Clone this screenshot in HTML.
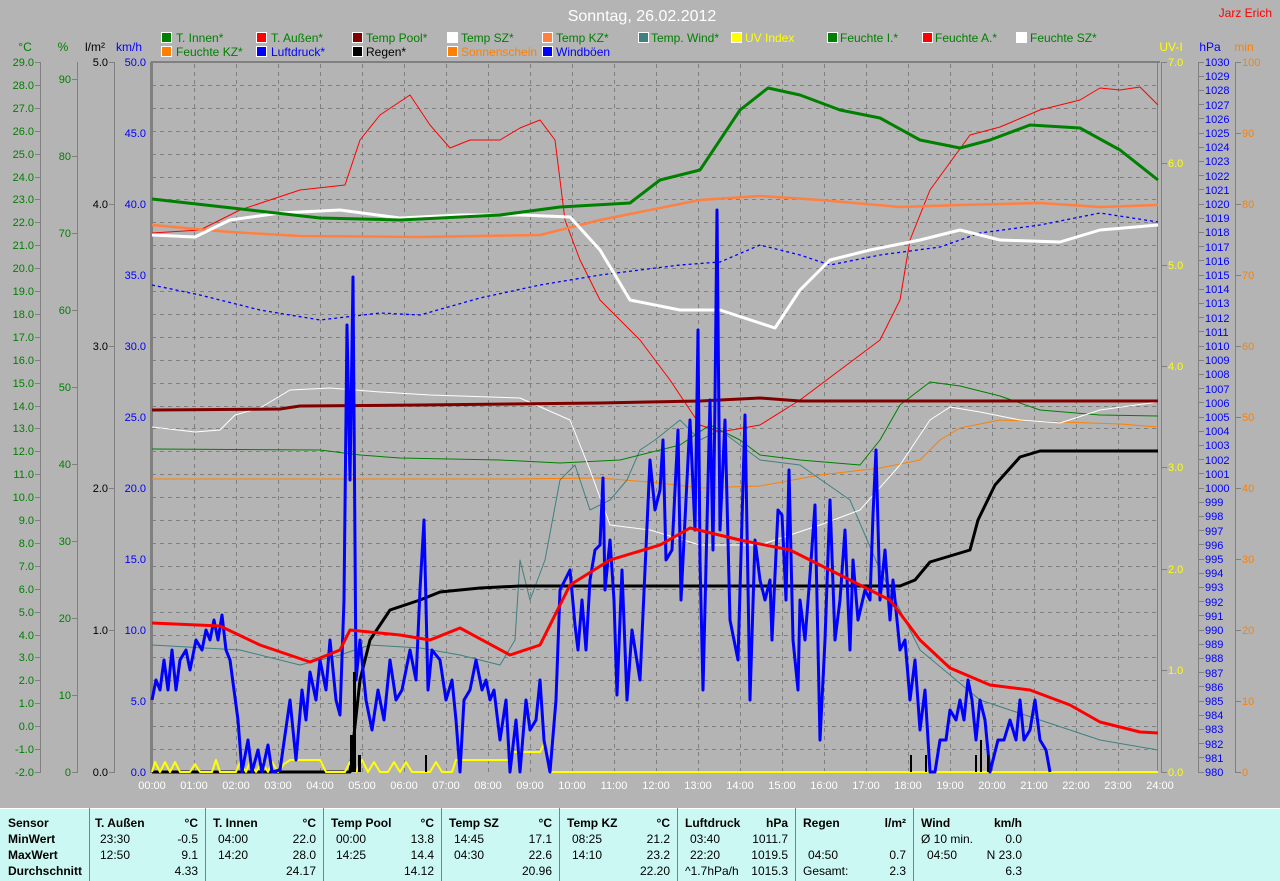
<!DOCTYPE html>
<html><head><meta charset="utf-8"><style>
html,body{margin:0;padding:0;background:#b4b4b4;}
svg{display:block;font-family:"Liberation Sans",sans-serif;}
.tb{font-size:12px;}
</style></head><body>
<svg width="1280" height="881" viewBox="0 0 1280 881" xmlns="http://www.w3.org/2000/svg">
<rect width="1280" height="881" fill="#b4b4b4"/>
<text x="642" y="21" text-anchor="middle" fill="#fff" font-size="16">Sonntag, 26.02.2012</text>
<text x="1272" y="17" text-anchor="end" fill="#f00" font-size="12">Jarz Erich</text>
<!-- legend -->
<g font-size="12" stroke="#fff" stroke-width="1">
<rect x="161.5" y="32.5" width="10" height="10" fill="#008000"/>
<rect x="256.5" y="32.5" width="10" height="10" fill="#f00"/>
<rect x="352.5" y="32.5" width="10" height="10" fill="#800000"/>
<rect x="447.5" y="32.5" width="10" height="10" fill="#fff"/>
<rect x="542.5" y="32.5" width="10" height="10" fill="#ff8040"/>
<rect x="638.5" y="32.5" width="10" height="10" fill="#408080"/>
<rect x="731.5" y="32.5" width="10" height="10" fill="#ff0"/>
<rect x="827.5" y="32.5" width="10" height="10" fill="#008000"/>
<rect x="922.5" y="32.5" width="10" height="10" fill="#f00"/>
<rect x="1016.5" y="32.5" width="10" height="10" fill="#fff"/>
<rect x="161.5" y="46.5" width="10" height="10" fill="#ff8000"/>
<rect x="256.5" y="46.5" width="10" height="10" fill="#00f"/>
<rect x="352.5" y="46.5" width="10" height="10" fill="#000"/>
<rect x="447.5" y="46.5" width="10" height="10" fill="#ff8000"/>
<rect x="542.5" y="46.5" width="10" height="10" fill="#00f"/>
</g>
<g font-size="12" fill="#008000">
<text x="176" y="42">T. Innen*</text>
<text x="271" y="42">T. Außen*</text>
<text x="366" y="42">Temp Pool*</text>
<text x="461" y="42">Temp SZ*</text>
<text x="556" y="42">Temp KZ*</text>
<text x="651" y="42">Temp. Wind*</text>
<text x="745" y="42" fill="#ff0">UV Index</text>
<text x="840" y="42">Feuchte I.*</text>
<text x="935" y="42">Feuchte A.*</text>
<text x="1030" y="42">Feuchte SZ*</text>
<text x="176" y="56">Feuchte KZ*</text>
<text x="271" y="56" fill="#00f">Luftdruck*</text>
<text x="366" y="56" fill="#000">Regen*</text>
<text x="461" y="56" fill="#ff8000">Sonnenschein</text>
<text x="556" y="56" fill="#00f">Windböen</text>
</g>
<!-- axis headers -->
<g font-size="12">
<text x="25" y="51" text-anchor="middle" fill="#008000">°C</text>
<text x="63" y="51" text-anchor="middle" fill="#008000">%</text>
<text x="95" y="51" text-anchor="middle" fill="#000">l/m²</text>
<text x="129" y="51" text-anchor="middle" fill="#00f">km/h</text>
<text x="1171" y="51" text-anchor="middle" fill="#ff0">UV-I</text>
<text x="1210" y="51" text-anchor="middle" fill="#00f">hPa</text>
<text x="1244" y="51" text-anchor="middle" fill="#ff8000">min</text>
</g>
<!-- grid -->
<g stroke="#808080" stroke-width="1" stroke-dasharray="4,4">
<path d="M194.5 64V772M236.5 64V772M278.5 64V772M320.5 64V772M362.5 64V772M404.5 64V772M446.5 64V772M488.5 64V772M530.5 64V772M572.5 64V772M614.5 64V772M656.5 64V772M698.5 64V772M740.5 64V772M782.5 64V772M824.5 64V772M866.5 64V772M908.5 64V772M950.5 64V772M992.5 64V772M1034.5 64V772M1076.5 64V772M1118.5 64V772"/>
<path d="M152 85.5H1158M152 108.5H1158M152 131.5H1158M152 154.5H1158M152 177.5H1158M152 199.5H1158M152 222.5H1158M152 245.5H1158M152 268.5H1158M152 291.5H1158M152 314.5H1158M152 337.5H1158M152 360.5H1158M152 383.5H1158M152 406.5H1158M152 428.5H1158M152 451.5H1158M152 474.5H1158M152 497.5H1158M152 520.5H1158M152 543.5H1158M152 566.5H1158M152 589.5H1158M152 612.5H1158M152 635.5H1158M152 657.5H1158M152 680.5H1158M152 703.5H1158M152 726.5H1158M152 749.5H1158"/>
</g>
<!-- borders -->
<g stroke="#808080" fill="none">
<path d="M151 62H1160" stroke-width="2"/>
<path d="M151.5 62V773" stroke-width="3"/>
<path d="M1157.5 62V773M1161.5 62V773" stroke-width="1"/>
<path d="M40.5 62V773M77.5 62V773M114.5 62V773M1198.5 62V773M1235.5 62V773"/>
</g>
<!-- °C axis -->
<g stroke="#808080"><path d="M35 62.5h5M35 85.5h5M35 108.5h5M35 131.5h5M35 154.5h5M35 177.5h5M35 199.5h5M35 222.5h5M35 245.5h5M35 268.5h5M35 291.5h5M35 314.5h5M35 337.5h5M35 360.5h5M35 383.5h5M35 406.5h5M35 428.5h5M35 451.5h5M35 474.5h5M35 497.5h5M35 520.5h5M35 543.5h5M35 566.5h5M35 589.5h5M35 612.5h5M35 635.5h5M35 657.5h5M35 680.5h5M35 703.5h5M35 726.5h5M35 749.5h5M35 772.5h5"/>
<path d="M72 79.5h5M72 156.5h5M72 233.5h5M72 310.5h5M72 387.5h5M72 464.5h5M72 541.5h5M72 618.5h5M72 695.5h5M72 772.5h5"/>
<path d="M109 62.5h5M109 204.5h5M109 346.5h5M109 488.5h5M109 630.5h5M109 772.5h5"/>
<path d="M1162 62.5h5M1162 163.5h5M1162 265.5h5M1162 366.5h5M1162 467.5h5M1162 569.5h5M1162 670.5h5M1162 772.5h5"/>
<path d="M1236 62.5h5M1236 133.5h5M1236 204.5h5M1236 275.5h5M1236 346.5h5M1236 417.5h5M1236 488.5h5M1236 559.5h5M1236 630.5h5M1236 701.5h5M1236 772.5h5"/>
</g>
<g font-size="11" fill="#008000" text-anchor="end">
<text x="34" y="66">29.0</text><text x="34" y="89">28.0</text><text x="34" y="112">27.0</text><text x="34" y="135">26.0</text><text x="34" y="158">25.0</text><text x="34" y="181">24.0</text><text x="34" y="203">23.0</text><text x="34" y="226">22.0</text><text x="34" y="249">21.0</text><text x="34" y="272">20.0</text><text x="34" y="295">19.0</text><text x="34" y="318">18.0</text><text x="34" y="341">17.0</text><text x="34" y="364">16.0</text><text x="34" y="387">15.0</text><text x="34" y="410">14.0</text><text x="34" y="432">13.0</text><text x="34" y="455">12.0</text><text x="34" y="478">11.0</text><text x="34" y="501">10.0</text><text x="34" y="524">9.0</text><text x="34" y="547">8.0</text><text x="34" y="570">7.0</text><text x="34" y="593">6.0</text><text x="34" y="616">5.0</text><text x="34" y="639">4.0</text><text x="34" y="661">3.0</text><text x="34" y="684">2.0</text><text x="34" y="707">1.0</text><text x="34" y="730">0.0</text><text x="34" y="753">-1.0</text><text x="34" y="776">-2.0</text>
<text x="71" y="83">90</text><text x="71" y="160">80</text><text x="71" y="237">70</text><text x="71" y="314">60</text><text x="71" y="391">50</text><text x="71" y="468">40</text><text x="71" y="545">30</text><text x="71" y="622">20</text><text x="71" y="699">10</text><text x="71" y="776">0</text>
</g>
<g font-size="11" fill="#000" text-anchor="end">
<text x="108" y="66">5.0</text><text x="108" y="208">4.0</text><text x="108" y="350">3.0</text><text x="108" y="492">2.0</text><text x="108" y="634">1.0</text><text x="108" y="776">0.0</text>
</g>
<g font-size="11" fill="#00f" text-anchor="end">
<text x="146" y="66">50.0</text><text x="146" y="137">45.0</text><text x="146" y="208">40.0</text><text x="146" y="279">35.0</text><text x="146" y="350">30.0</text><text x="146" y="421">25.0</text><text x="146" y="492">20.0</text><text x="146" y="563">15.0</text><text x="146" y="634">10.0</text><text x="146" y="705">5.0</text><text x="146" y="776">0.0</text>
</g>
<g font-size="11" fill="#ff0">
<text x="1168" y="66">7.0</text><text x="1168" y="167">6.0</text><text x="1168" y="269">5.0</text><text x="1168" y="370">4.0</text><text x="1168" y="471">3.0</text><text x="1168" y="573">2.0</text><text x="1168" y="674">1.0</text><text x="1168" y="776">0.0</text>
</g>
<g font-size="11" fill="#ff8000">
<text x="1242" y="66">100</text><text x="1242" y="137">90</text><text x="1242" y="208">80</text><text x="1242" y="279">70</text><text x="1242" y="350">60</text><text x="1242" y="421">50</text><text x="1242" y="492">40</text><text x="1242" y="563">30</text><text x="1242" y="634">20</text><text x="1242" y="705">10</text><text x="1242" y="776">0</text>
</g>
<g stroke="#808080"><path d="M1199 62.5h5M1199 76.5h5M1199 90.5h5M1199 104.5h5M1199 118.5h5M1199 133.5h5M1199 147.5h5M1199 161.5h5M1199 175.5h5M1199 189.5h5M1199 204.5h5M1199 218.5h5M1199 232.5h5M1199 246.5h5M1199 260.5h5M1199 275.5h5M1199 289.5h5M1199 303.5h5M1199 317.5h5M1199 331.5h5M1199 346.5h5M1199 360.5h5M1199 374.5h5M1199 388.5h5M1199 402.5h5M1199 417.5h5M1199 431.5h5M1199 445.5h5M1199 459.5h5M1199 473.5h5M1199 488.5h5M1199 502.5h5M1199 516.5h5M1199 530.5h5M1199 544.5h5M1199 559.5h5M1199 573.5h5M1199 587.5h5M1199 601.5h5M1199 615.5h5M1199 630.5h5M1199 644.5h5M1199 658.5h5M1199 672.5h5M1199 686.5h5M1199 701.5h5M1199 715.5h5M1199 729.5h5M1199 743.5h5M1199 757.5h5M1199 772.5h5"/></g>
<g font-size="11" fill="#00f">
<text x="1205" y="66">1030</text><text x="1205" y="80">1029</text><text x="1205" y="94">1028</text><text x="1205" y="109">1027</text><text x="1205" y="123">1026</text><text x="1205" y="137">1025</text><text x="1205" y="151">1024</text><text x="1205" y="165">1023</text><text x="1205" y="180">1022</text><text x="1205" y="194">1021</text><text x="1205" y="208">1020</text><text x="1205" y="222">1019</text><text x="1205" y="236">1018</text><text x="1205" y="251">1017</text><text x="1205" y="265">1016</text><text x="1205" y="279">1015</text><text x="1205" y="293">1014</text><text x="1205" y="307">1013</text><text x="1205" y="322">1012</text><text x="1205" y="336">1011</text><text x="1205" y="350">1010</text><text x="1205" y="364">1009</text><text x="1205" y="378">1008</text><text x="1205" y="393">1007</text><text x="1205" y="407">1006</text><text x="1205" y="421">1005</text><text x="1205" y="435">1004</text><text x="1205" y="449">1003</text><text x="1205" y="464">1002</text><text x="1205" y="478">1001</text><text x="1205" y="492">1000</text><text x="1205" y="506">999</text><text x="1205" y="520">998</text><text x="1205" y="535">997</text><text x="1205" y="549">996</text><text x="1205" y="563">995</text><text x="1205" y="577">994</text><text x="1205" y="591">993</text><text x="1205" y="606">992</text><text x="1205" y="620">991</text><text x="1205" y="634">990</text><text x="1205" y="648">989</text><text x="1205" y="662">988</text><text x="1205" y="677">987</text><text x="1205" y="691">986</text><text x="1205" y="705">985</text><text x="1205" y="719">984</text><text x="1205" y="733">983</text><text x="1205" y="748">982</text><text x="1205" y="762">981</text><text x="1205" y="776">980</text>
</g>
<!-- time labels -->
<g font-size="11" fill="#fff" text-anchor="middle">
<text x="152" y="789">00:00</text><text x="194" y="789">01:00</text><text x="236" y="789">02:00</text><text x="278" y="789">03:00</text><text x="320" y="789">04:00</text><text x="362" y="789">05:00</text><text x="404" y="789">06:00</text><text x="446" y="789">07:00</text><text x="488" y="789">08:00</text><text x="530" y="789">09:00</text><text x="572" y="789">10:00</text><text x="614" y="789">11:00</text><text x="656" y="789">12:00</text><text x="698" y="789">13:00</text><text x="740" y="789">14:00</text><text x="782" y="789">15:00</text><text x="824" y="789">16:00</text><text x="866" y="789">17:00</text><text x="908" y="789">18:00</text><text x="950" y="789">19:00</text><text x="992" y="789">20:00</text><text x="1034" y="789">21:00</text><text x="1076" y="789">22:00</text><text x="1118" y="789">23:00</text><text x="1160" y="789">24:00</text>
</g>
<!-- data -->
<g fill="none" stroke-linejoin="round">
<polyline stroke="#ff8000" stroke-width="1" points="152,479 512,479 600,478 660,483 700,488 760,486 820,475 880,468 920,460 940,440 960,428 1000,420 1060,422 1120,424 1158,427"/>
<polyline stroke="#408080" stroke-width="1" points="152,645 240,650 300,665 340,655 370,645 420,648 460,655 500,665 515,640 520,560 530,600 545,560 560,480 575,465 590,510 610,500 627,480 640,450 655,440 680,420 700,440 720,430 760,460 800,465 850,500 880,570 920,650 980,700 1040,720 1100,740 1158,750"/>
<polyline stroke="#008000" stroke-width="1" points="152,449 320,450 360,455 400,458 500,460 560,463 620,460 680,445 710,425 740,440 760,455 800,460 860,465 880,440 900,405 930,382 960,386 1000,396 1040,410 1100,415 1158,416"/>
<polyline stroke="#fff" stroke-width="1" points="152,427 195,432 220,430 235,415 260,408 290,390 330,388 380,392 430,395 520,398 570,420 590,470 610,525 650,530 700,545 760,545 820,525 860,510 900,465 930,420 950,407 980,412 1020,420 1060,423 1100,410 1158,402"/>
<polyline stroke="#f00" stroke-width="1" points="152,233 200,230 240,210 300,190 345,185 360,140 380,115 410,95 430,125 450,148 470,140 500,140 520,128 540,120 555,140 565,220 580,260 600,300 640,340 670,380 700,425 720,432 760,425 800,400 840,370 880,340 900,300 910,240 930,190 970,135 1000,127 1040,110 1080,100 1100,88 1120,90 1140,87 1158,105"/>
<polyline stroke="#0000ff" stroke-width="1.3" stroke-dasharray="3,3" points="152,285 200,295 260,310 320,320 380,313 420,315 480,298 540,285 600,275 680,265 720,262 760,245 800,255 830,265 880,255 940,247 980,233 1040,225 1100,213 1158,222"/>
<polyline stroke="#800000" stroke-width="3" points="152,410 280,409 300,406 420,405 600,403 700,401 760,398 800,401 1158,401"/>
<polyline stroke="#ff8040" stroke-width="2.5" points="152,225 230,232 300,236 420,237 540,235 600,220 700,200 760,196 820,200 900,207 960,205 1040,203 1100,207 1158,205"/>
<polyline stroke="#fff" stroke-width="3" points="152,235 195,237 230,220 280,213 340,210 400,218 460,215 520,215 570,217 600,250 630,300 680,310 720,310 775,328 800,290 830,260 870,250 920,240 960,230 1000,240 1060,242 1100,230 1158,225"/>
<polyline stroke="#008000" stroke-width="3" points="152,199 250,210 320,218 400,220 500,215 560,207 630,203 660,180 700,170 740,110 768,88 800,95 840,110 880,118 920,140 960,148 990,140 1030,125 1080,128 1120,150 1158,180"/>
<polyline stroke="#000" stroke-width="3" points="152,772 350,772 360,680 370,640 390,610 420,600 440,592 480,588 520,586 900,586 915,580 930,562 970,550 978,520 995,485 1020,457 1040,451 1158,451"/>
<polyline stroke="#ff0" stroke-width="2" points="152,772 155,762 160,772 165,762 170,772 175,762 180,772 190,772 195,764 200,772 212,772 216,760 220,772 236,772 240,762 246,772 250,762 256,772 262,762 268,772 272,762 278,772 284,764 290,760 320,760 326,772 345,772 350,762 356,772 362,760 368,772 374,762 380,772 388,772 394,762 400,772 406,762 412,772 430,772 436,762 442,772 452,772 456,760 508,760 512,752 540,752 545,742 550,772 1158,772"/>
<polyline stroke="#00f" stroke-width="3" points="152,700 156,680 160,690 164,660 168,690 172,650 176,690 180,660 186,650 190,670 196,640 202,650 206,630 210,640 214,620 218,640 222,615 226,650 230,660 234,690 238,720 242,772 248,740 252,772 258,750 262,772 268,745 272,772 280,770 290,700 296,760 302,690 306,720 310,672 316,700 320,660 326,690 330,640 336,700 340,715 344,600 347,325 350,480 353,277 356,680 360,640 366,700 372,730 378,690 384,720 390,660 396,700 402,690 410,650 416,680 420,590 424,520 428,690 432,650 440,660 446,700 452,680 456,720 460,772 464,700 470,690 476,660 482,690 486,680 490,700 494,690 500,740 506,700 510,772 516,720 520,772 526,700 530,730 536,720 540,680 544,740 550,772 556,700 560,590 570,570 575,625 578,650 582,600 586,650 590,580 595,550 600,545 603,478 605,590 610,540 614,600 617,695 622,570 627,700 632,630 640,680 645,570 650,460 655,510 660,490 663,440 666,560 672,550 678,430 681,600 688,460 690,420 695,530 698,330 700,560 703,690 710,400 713,550 715,400 717,210 720,530 725,420 730,620 738,660 742,520 745,415 750,700 755,540 760,580 765,600 770,580 772,640 778,510 782,515 786,600 789,470 793,640 798,690 800,600 805,640 810,575 815,505 820,740 825,640 830,500 835,640 840,600 845,530 850,650 853,560 858,620 865,590 870,600 873,515 876,450 880,600 885,550 890,620 893,580 900,650 905,640 910,700 915,660 920,730 925,690 930,772 935,772 940,740 946,740 950,710 956,720 960,700 964,720 968,680 972,700 976,740 980,700 985,720 990,772 998,740 1004,740 1010,720 1016,740 1020,700 1024,740 1030,730 1035,700 1040,740 1046,750 1050,772"/>
<polyline stroke="#f00" stroke-width="3" points="152,623 220,626 260,645 310,662 340,650 350,630 400,635 430,640 460,628 510,655 540,645 570,585 610,560 660,545 690,528 740,540 790,550 840,575 890,600 920,640 950,668 990,685 1030,690 1070,705 1100,722 1140,732 1158,733"/>
</g>
<g fill="#000"><rect x="350" y="735" width="3" height="37"/><rect x="353" y="672" width="3" height="100"/><rect x="358" y="755" width="3" height="17"/><rect x="425" y="755" width="2" height="17"/><rect x="910" y="755" width="2" height="17"/><rect x="925" y="755" width="2" height="17"/><rect x="975" y="755" width="2" height="17"/><rect x="980" y="740" width="2" height="32"/><rect x="987" y="755" width="2" height="17"/></g>
<!-- table -->
<rect x="0" y="808" width="1280" height="73" fill="#ccf8f4"/>
<path d="M0 808.5H1280" stroke="#fff"/>
<g stroke="#808080"><path d="M89.5 808V881M205.5 808V881M323.5 808V881M441.5 808V881M559.5 808V881M677.5 808V881M795.5 808V881M913.5 808V881"/></g>
<g class="tb" fill="#000">
<g font-weight="bold"><text x="8" y="827">Sensor</text><text x="8" y="843">MinWert</text><text x="8" y="859">MaxWert</text><text x="8" y="875">Durchschnitt</text>
<text x="95" y="827">T. Außen</text><text x="213" y="827">T. Innen</text><text x="331" y="827">Temp Pool</text><text x="449" y="827">Temp SZ</text><text x="567" y="827">Temp KZ</text><text x="685" y="827">Luftdruck</text><text x="803" y="827">Regen</text><text x="921" y="827">Wind</text>
<g text-anchor="end"><text x="198" y="827">°C</text><text x="316" y="827">°C</text><text x="434" y="827">°C</text><text x="552" y="827">°C</text><text x="670" y="827">°C</text><text x="788" y="827">hPa</text><text x="906" y="827">l/m²</text><text x="1022" y="827">km/h</text></g></g>
<text x="100" y="843">23:30</text><text x="100" y="859">12:50</text>
<text x="218" y="843">04:00</text><text x="218" y="859">14:20</text>
<text x="336" y="843">00:00</text><text x="336" y="859">14:25</text>
<text x="454" y="843">14:45</text><text x="454" y="859">04:30</text>
<text x="572" y="843">08:25</text><text x="572" y="859">14:10</text>
<text x="690" y="843">03:40</text><text x="690" y="859">22:20</text><text x="685" y="875">^1.7hPa/h</text>
<text x="808" y="859">04:50</text><text x="803" y="875">Gesamt:</text>
<text x="921" y="843">Ø 10 min.</text><text x="927" y="859">04:50</text>
<g text-anchor="end">
<text x="198" y="843">-0.5</text><text x="198" y="859">9.1</text><text x="198" y="875">4.33</text>
<text x="316" y="843">22.0</text><text x="316" y="859">28.0</text><text x="316" y="875">24.17</text>
<text x="434" y="843">13.8</text><text x="434" y="859">14.4</text><text x="434" y="875">14.12</text>
<text x="552" y="843">17.1</text><text x="552" y="859">22.6</text><text x="552" y="875">20.96</text>
<text x="670" y="843">21.2</text><text x="670" y="859">23.2</text><text x="670" y="875">22.20</text>
<text x="788" y="843">1011.7</text><text x="788" y="859">1019.5</text><text x="788" y="875">1015.3</text>
<text x="906" y="859">0.7</text><text x="906" y="875">2.3</text>
<text x="1022" y="843">0.0</text><text x="1022" y="859">N 23.0</text><text x="1022" y="875">6.3</text>
</g></g>
</svg>
</body></html>
